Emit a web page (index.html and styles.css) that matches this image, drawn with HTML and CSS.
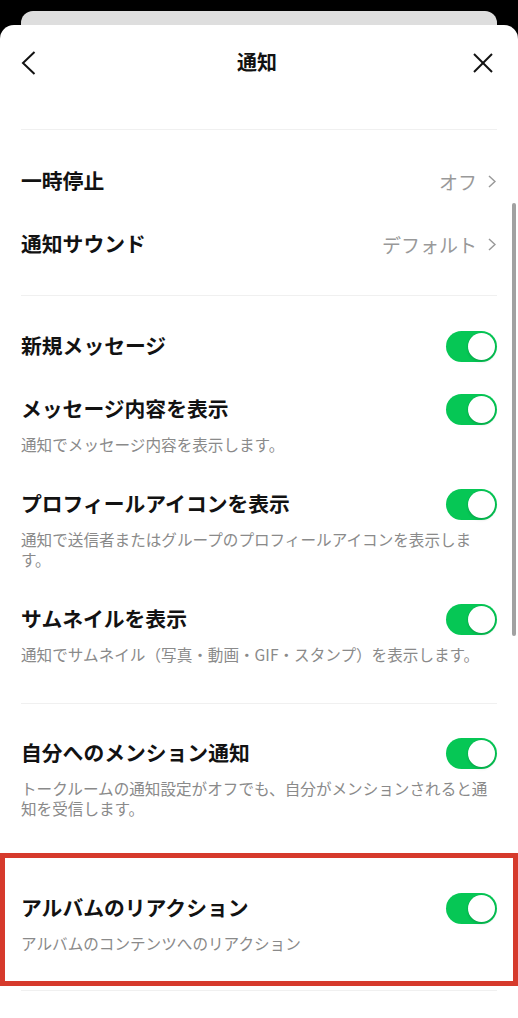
FILE: index.html
```html
<!DOCTYPE html>
<html lang="ja">
<head>
    <meta charset="UTF-8">
    <meta name="viewport" content="width=device-width, initial-scale=1.0">
    <title>通知</title>
    <link rel="stylesheet" href="styles.css">
</head>
<body>
    <div class="sheet-back"></div>
    <main class="sheet">
        <header class="sheet__header">
            <button class="sheet__btn sheet__btn--back" type="button" aria-label="戻る">
                <svg viewBox="0 0 15 24" width="15" height="24" aria-hidden="true">
                    <polyline points="13.5 1,2 12,13.5 23" fill="none" stroke="hsl(0,0%,7%)" stroke-width="2" />
                </svg>
            </button>
            <h1 class="sheet__title">通知</h1>
            <button class="sheet__btn sheet__btn--close" type="button" aria-label="閉じる">
                <svg viewBox="0 0 20 20" width="20" height="20" aria-hidden="true">
                    <g stroke="hsl(0,0%,7%)" stroke-width="2">
                        <line x1="1" y1="1" x2="19" y2="19" />
                        <line x1="19" y1="1" x2="1" y2="19" />
                    </g>
                </svg>
            </button>
        </header>

        <hr class="divider">
        <section class="group group--links">
            <div class="item">
                <div class="item__head">
                    <span class="item__title">一時停止</span>
                    <span class="item__value">オフ
                        <svg class="item__chevron" viewBox="0 0 8 13" width="8" height="13" aria-hidden="true"><polyline points="1 1,7 6.5,1 12" fill="none" stroke="currentColor" stroke-width="1.5" /></svg>
                    </span>
                </div>
            </div>
            <div class="item">
                <div class="item__head">
                    <span class="item__title">通知サウンド</span>
                    <span class="item__value">デフォルト
                        <svg class="item__chevron" viewBox="0 0 8 13" width="8" height="13" aria-hidden="true"><polyline points="1 1,7 6.5,1 12" fill="none" stroke="currentColor" stroke-width="1.5" /></svg>
                    </span>
                </div>
            </div>
        </section>

        <hr class="divider">
        <section class="group group--messages">
            <div class="item">
                <div class="item__head">
                    <span class="item__title">新規メッセージ</span>
                    <span class="toggle" role="switch" aria-checked="true"></span>
                </div>
            </div>
            <div class="item">
                <div class="item__head">
                    <span class="item__title">メッセージ内容を表示</span>
                    <span class="toggle" role="switch" aria-checked="true"></span>
                </div>
                <p class="item__sub">通知でメッセージ内容を表示します。</p>
            </div>
            <div class="item">
                <div class="item__head">
                    <span class="item__title">プロフィールアイコンを表示</span>
                    <span class="toggle" role="switch" aria-checked="true"></span>
                </div>
                <p class="item__sub">通知で送信者またはグループのプロフィールアイコンを表示します。</p>
            </div>
            <div class="item">
                <div class="item__head">
                    <span class="item__title">サムネイルを表示</span>
                    <span class="toggle" role="switch" aria-checked="true"></span>
                </div>
                <p class="item__sub">通知でサムネイル（写真・動画・GIF・スタンプ）を表示します。</p>
            </div>
        </section>

        <hr class="divider">
        <section class="group group--mentions">
            <div class="item">
                <div class="item__head">
                    <span class="item__title">自分へのメンション通知</span>
                    <span class="toggle" role="switch" aria-checked="true"></span>
                </div>
                <p class="item__sub">トークルームの通知設定がオフでも、自分がメンションされると通知を受信します。</p>
            </div>
            <div class="highlight">
                <div class="item">
                    <div class="item__head">
                        <span class="item__title">アルバムのリアクション</span>
                        <span class="toggle" role="switch" aria-checked="true"></span>
                    </div>
                    <p class="item__sub">アルバムのコンテンツへのリアクション</p>
                </div>
            </div>
        </section>
        <hr class="divider">

        <div class="scrollbar" aria-hidden="true"></div>
    </main>
</body>
</html>
```

FILE: styles.css
```css
* {
    border: 0;
    box-sizing: border-box;
    margin: 0;
    padding: 0;
}
:root {
    --bg: hsl(0,0%,0%);
    --sheet: hsl(0,0%,100%);
    --fg: hsl(0,0%,7%);
    --muted: hsl(0,0%,54%);
    --value: hsl(0,0%,60%);
    --line: hsl(0,0%,94%);
    --green: #06c755;
    --mark: #d63a2c;
}
body {
    background-color: var(--bg);
    color: var(--fg);
    font: 16px/1.5 "Noto Sans CJK JP", "Noto Sans", sans-serif;
    height: 100vh;
    overflow: hidden;
}
button {
    background: none;
    color: inherit;
    cursor: pointer;
    font: inherit;
}
.sheet-back {
    background-color: hsl(0,0%,87%);
    border-radius: 12px 12px 0 0;
    height: 14px;
    margin: 11px 21px 0;
}
.sheet {
    background-color: var(--sheet);
    border-radius: 14px 14px 0 0;
    min-height: calc(100vh - 25px);
    position: relative;
}
.sheet__header {
    display: grid;
    grid-template-columns: 1fr auto 1fr;
    align-items: center;
    height: 75px;
    margin-bottom: 29px;
    padding: 0 25px 0 21px;
}
.sheet__btn {
    display: flex;
}
.sheet__btn--close {
    justify-self: end;
}
.sheet__title {
    font-size: 20px;
    font-weight: 700;
    line-height: 28px;
    padding-bottom: 2px;
}
.divider {
    background-color: var(--line);
    display: block;
    height: 1px;
    margin: 0 21px;
}
.group--links {
    padding: 20px 0 19px;
}
.group--messages {
    padding: 19px 0 20px;
}
.group--mentions {
    padding: 18px 0 4px;
}
.item {
    padding: 16px 21px;
}
.item__head {
    display: flex;
    align-items: center;
    justify-content: space-between;
    height: 31px;
}
.item__title {
    font-size: 20.8px;
    font-weight: 700;
    line-height: 28px;
    padding-bottom: 4px;
}
.item__value {
    color: var(--value);
    display: flex;
    align-items: center;
    gap: 11px;
    font-size: 19px;
    line-height: 28px;
    padding-right: 1px;
}
.item__chevron {
    display: block;
}
.item__sub {
    color: var(--muted);
    font-size: 15.6px;
    line-height: 20px;
    margin: 9px 0 3px;
}
.toggle {
    background-color: var(--green);
    border-radius: 16px;
    display: block;
    flex-shrink: 0;
    height: 31px;
    position: relative;
    width: 51px;
}
.toggle:after {
    background-color: hsl(0,0%,100%);
    border-radius: 50%;
    box-shadow: 0 0 0 0.5px hsla(0,0%,0%,0.08), 0 2px 3px hsla(0,0%,0%,0.12);
    content: "";
    position: absolute;
    top: 2px;
    right: 2px;
    width: 27px;
    height: 27px;
}

/* highlighted row */
.highlight {
    border: 5px solid var(--mark);
    margin-top: 16px;
    padding: 19px 0 9px;
}
.highlight .item {
    padding-left: 16px;
    padding-right: 16px;
}
.scrollbar {
    background-color: hsl(0,0%,63%);
    border-radius: 2px;
    position: absolute;
    top: 178px;
    right: 2px;
    width: 4px;
    height: 433px;
}
```
